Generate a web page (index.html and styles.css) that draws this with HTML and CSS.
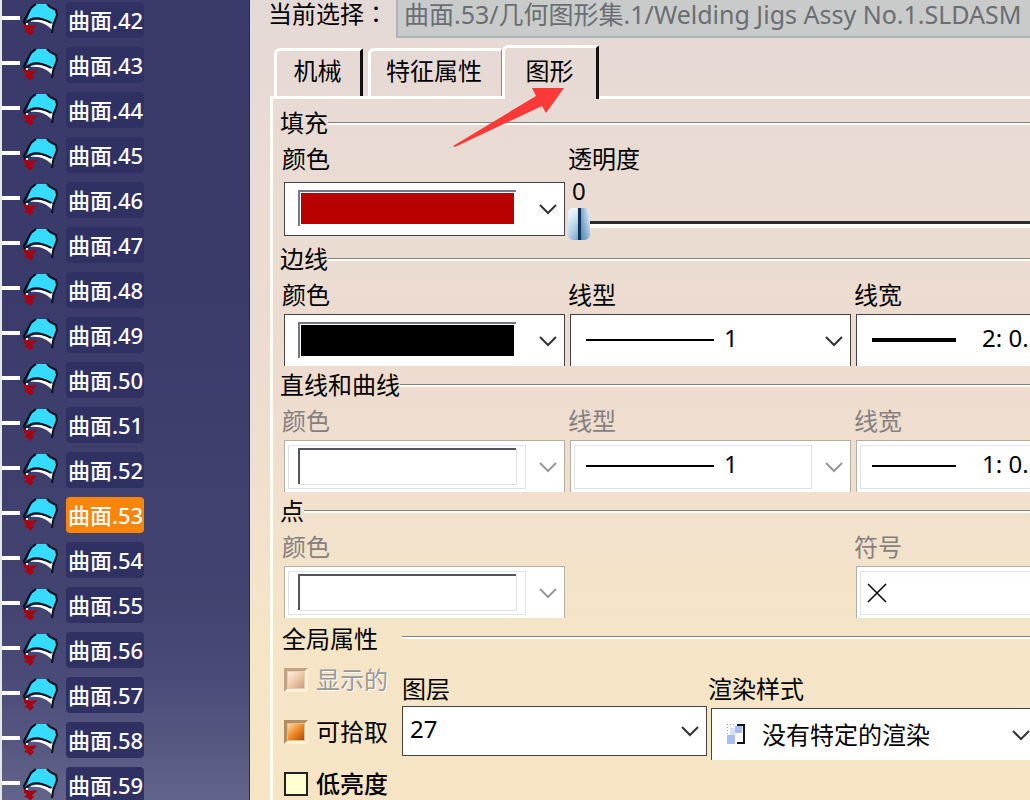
FILE: index.html
```html
<!DOCTYPE html>
<html lang="zh-CN">
<head>
  <meta charset="UTF-8">
  <meta name="viewport" content="width=device-width, initial-scale=1.0">
  <title>属性</title>
  <link rel="stylesheet" href="styles.css">
</head>
<body>
  <!-- 公用图标 -->
  <svg class="symbols" aria-hidden="true">
    <symbol id="surface" viewBox="0 0 38 36">
      <path d="M4 21 L9 6 L14 2 L25 2 L28 5 L35 8 L35 13 L31 21 C24 16 12 13 4 21 Z" fill="#35dcff"/>
      <path d="M9 19 C16 16 25 19 31 22 L30 28 C25 22 18 19 9 20 Z" fill="#fff"/>
      <path d="M14 2 L9 6 L2 19 L3 23" fill="none" stroke="#07101c" stroke-width="2"/>
      <path d="M4 21 C10 14 20 16 29 21" fill="none" stroke="#07101c" stroke-width="2"/>
      <path d="M25 2 L28 5 L34 8 L35 13 L31 24 L30 31" fill="none" stroke="#07101c" stroke-width="2"/>
      <path d="M2 22 L8 24 L15 23 L13 26 L10 28 L12 30 L8 34 L6 31 L2 30 L5 27 L2 26 Z" fill="#a80010"/>
      <rect x="4" y="21" width="2" height="2" fill="#fff"/>
    </symbol>
    <symbol id="chevron" viewBox="0 0 18 12">
      <path d="M1 2 L9 10 L17 2" fill="none" stroke="currentColor" stroke-width="2"/>
    </symbol>
  </svg>

  <div class="app">
    <ul class="tree">
      <li><svg><use href="#surface"/></svg><a href="#">曲面.42</a></li>
      <li><svg><use href="#surface"/></svg><a href="#">曲面.43</a></li>
      <li><svg><use href="#surface"/></svg><a href="#">曲面.44</a></li>
      <li><svg><use href="#surface"/></svg><a href="#">曲面.45</a></li>
      <li><svg><use href="#surface"/></svg><a href="#">曲面.46</a></li>
      <li><svg><use href="#surface"/></svg><a href="#">曲面.47</a></li>
      <li><svg><use href="#surface"/></svg><a href="#">曲面.48</a></li>
      <li><svg><use href="#surface"/></svg><a href="#">曲面.49</a></li>
      <li><svg><use href="#surface"/></svg><a href="#">曲面.50</a></li>
      <li><svg><use href="#surface"/></svg><a href="#">曲面.51</a></li>
      <li><svg><use href="#surface"/></svg><a href="#">曲面.52</a></li>
      <li><svg><use href="#surface"/></svg><a href="#" class="current">曲面.53</a></li>
      <li><svg><use href="#surface"/></svg><a href="#">曲面.54</a></li>
      <li><svg><use href="#surface"/></svg><a href="#">曲面.55</a></li>
      <li><svg><use href="#surface"/></svg><a href="#">曲面.56</a></li>
      <li><svg><use href="#surface"/></svg><a href="#">曲面.57</a></li>
      <li><svg><use href="#surface"/></svg><a href="#">曲面.58</a></li>
      <li><svg><use href="#surface"/></svg><a href="#">曲面.59</a></li>
    </ul>

    <div class="dialog">
      <div class="selection">
        <label for="selection" lang="zh-TW">当前选择：</label>
        <input type="text" id="selection" value="曲面.53/几何图形集.1/Welding Jigs Assy No.1.SLDASM" disabled>
      </div>

      <div class="tabs">
        <button type="button" class="tab tab-first">机械</button>
        <button type="button" class="tab tab-second">特征属性</button>
        <button type="button" class="tab tab-active">图形</button>
        <svg class="arrow" viewBox="0 0 112 60"><path d="M0 58 L83 8 L79 0 L111 0 L93 25 L89 18 L2 59 Z" fill="#fb3a38"/></svg>
      </div>

      <div class="panel">
        <section>
          <h2>填充</h2>
          <div class="fields fields-fill">
            <div class="field">
              <label for="fill-color">颜色</label>
              <div class="combo combo-fill">
                <select id="fill-color"></select>
                <span class="swatch red"></span>
                <svg class="chevron"><use href="#chevron"/></svg>
              </div>
            </div>
            <div class="field opacity">
              <label for="opacity">透明度</label>
              <output for="opacity">0</output>
              <input type="range" id="opacity" min="0" max="255" value="0">
            </div>
          </div>
        </section>

        <section>
          <h2>边线</h2>
          <div class="fields">
            <div class="field">
              <label for="edge-color">颜色</label>
              <div class="combo">
                <select id="edge-color"></select>
                <span class="swatch black"></span>
                <svg class="chevron"><use href="#chevron"/></svg>
              </div>
            </div>
            <div class="field">
              <label for="edge-type">线型</label>
              <div class="combo combo-type">
                <select id="edge-type"><option>1</option></select>
                <span class="line"></span>
                <svg class="chevron"><use href="#chevron"/></svg>
              </div>
            </div>
            <div class="field">
              <label for="edge-width">线宽</label>
              <div class="combo combo-width">
                <select id="edge-width"><option>2: 0.</option></select>
                <span class="line thick"></span>
              </div>
            </div>
          </div>
        </section>

        <section>
          <h2>直线和曲线</h2>
          <div class="fields">
            <div class="field off">
              <label for="curve-color">颜色</label>
              <div class="combo">
                <select id="curve-color" disabled></select>
                <span class="inner"></span>
                <span class="swatch"></span>
                <svg class="chevron"><use href="#chevron"/></svg>
              </div>
            </div>
            <div class="field off">
              <label for="curve-type">线型</label>
              <div class="combo combo-type">
                <select id="curve-type" disabled><option>1</option></select>
                <span class="inner"></span>
                <span class="line"></span>
                <svg class="chevron"><use href="#chevron"/></svg>
              </div>
            </div>
            <div class="field off">
              <label for="curve-width">线宽</label>
              <div class="combo combo-width">
                <select id="curve-width" disabled><option>1: 0.</option></select>
                <span class="inner"></span>
                <span class="line"></span>
              </div>
            </div>
          </div>
        </section>

        <section>
          <h2>点</h2>
          <div class="fields">
            <div class="field off">
              <label for="point-color">颜色</label>
              <div class="combo">
                <select id="point-color" disabled></select>
                <span class="inner"></span>
                <span class="swatch"></span>
                <svg class="chevron"><use href="#chevron"/></svg>
              </div>
            </div>
            <div class="field off symbol">
              <label for="point-symbol">符号</label>
              <div class="combo combo-width">
                <select id="point-symbol" disabled></select>
                <span class="inner"></span>
                <svg class="cross" viewBox="0 0 20 20"><path d="M1 1 L19 19 M19 1 L1 19" stroke="#000" stroke-width="1.5"/></svg>
              </div>
            </div>
          </div>
        </section>

        <section class="global">
          <h2>全局属性</h2>
          <div class="global-body">
            <div class="checks">
              <label class="disabled"><input type="checkbox" checked disabled>显示的</label>
              <label><input type="checkbox" checked>可拾取</label>
              <label class="strong"><input type="checkbox">低亮度</label>
            </div>
            <div class="field layer">
              <label for="layer">图层</label>
              <div class="combo">
                <select id="layer"><option>27</option></select>
                <svg class="chevron"><use href="#chevron"/></svg>
              </div>
            </div>
            <div class="field render">
              <label for="render">渲染样式</label>
              <div class="combo">
                <select id="render"><option>没有特定的渲染</option></select>
                <svg class="render-icon" viewBox="0 0 20 22">
                  <path d="M1 1h1v1h-1zM4 1h1v1h-1zM7 1h1v1h-1zM1 4h1v1h-1zM1 7h1v1h-1zM1 10h1v1h-1z" fill="#8f9bc4"/>
                  <path d="M9 3h7v7h-7z M1 12h8v9h-8z" fill="#a9bdf5"/>
                  <path d="M4 5h5v7h-5z" fill="#d6def8"/>
                  <path d="M11 2 H18 V20 H11" fill="none" stroke="#10102a" stroke-width="2"/>
                </svg>
                <svg class="chevron"><use href="#chevron"/></svg>
              </div>
            </div>
          </div>
        </section>
      </div>
    </div>
  </div>
</body>
</html>
```

FILE: styles.css
```css
html, body {
  margin: 0;
  padding: 0;
  height: 100%;
}
body, button, input, select {
  font-family: "Noto Sans", "Noto Sans CJK SC", sans-serif;
  font-size: 24px;
  line-height: 24px;
  color: #000;
}
body {
  overflow: hidden;
}
.symbols {
  display: none;
}
.app {
  display: flex;
  height: 100%;
}

/* 左侧结构树 */
.tree {
  display: flex;
  flex-direction: column;
  flex: none;
  gap: 9px;
  box-sizing: border-box;
  width: 250px;
  margin: 0;
  padding: 2px 0 0;
  list-style: none;
  border-left: 2px solid #e4e6ee;
  border-right: 1px solid #2b2a55;
  background: linear-gradient(#3a3b6b, #3a3b6b 35%, #42436f 75%, #4a4b78 85%, #63648a);
  overflow: hidden;
}
.tree li {
  display: flex;
  flex: none;
  align-items: center;
  height: 36px;
}
.tree li::before {
  content: "";
  width: 18px;
  height: 4px;
  margin-bottom: 4px;
  background: #fff;
}
.tree svg {
  width: 38px;
  height: 36px;
  margin: 0 6px 0 2px;
}
.tree a {
  padding: 0 1px 0 2px;
  border-radius: 4px;
  background: #303163;
  color: #fff;
  font-size: 22px;
  font-weight: 500;
  line-height: 36px;
  text-decoration: none;
}
.tree .current {
  background: #fb8509;
}

/* 属性对话框 */
.dialog {
  display: flex;
  flex-direction: column;
  flex: 1;
  min-width: 0;
  overflow: hidden;
  background: linear-gradient(#e5d9d7, #eadcd2 25%, #eedccf 50%, #f3e2cb 68%, #f5e5c6 80%, #f6e4c5);
}
.selection {
  display: flex;
  flex: none;
  height: 38px;
  margin-bottom: 7px;
  padding-left: 18px;
}
.selection label {
  width: 128px;
  font-family: "Noto Sans CJK TC", sans-serif;
  line-height: 26px;
  text-spacing-trim: space-all;
}
.selection input {
  flex: 1;
  min-width: 0;
  box-sizing: border-box;
  height: 38px;
  padding: 0 0 11px 6px;
  border: 1px solid #aeb3b7;
  border-width: 0 0 2px 2px;
  background: #c8cbca;
  color: #6b6d72;
  font-size: 25px;
}
.tabs {
  position: relative;
  display: flex;
  flex: none;
  align-items: flex-end;
  height: 51px;
  padding-left: 24px;
}
.tab {
  box-sizing: border-box;
  height: 48px;
  padding: 0 2px 5px 0;
  border: 0 solid #fff;
  border-width: 3px 3px 0;
  border-radius: 6px 2px 0 0;
  background: none;
}
.tab-first {
  width: 89px;
  margin-right: 5px;
  border-right-color: #111;
}
.tab-second {
  width: 134px;
  border-right: 1px solid #888;
  padding-right: 4px;
}
.tab-active {
  width: 97px;
  height: 54px;
  margin-bottom: -3px;
  border-right-color: #111;
  background: #e7dad5;
  z-index: 1;
}
/* 指向当前标签的箭头 */
.arrow {
  position: absolute;
  left: 203px;
  top: 43px;
  width: 112px;
  height: 60px;
  z-index: 2;
}
.panel {
  flex: 1 0 auto;
  margin-left: 20px;
  padding: 12px 0 0 7px;
  border: 0 solid #fffdf8;
  border-width: 3px 0 0 3px;
}
section {
  margin-bottom: 7px;
}
h2 {
  display: flex;
  align-items: center;
  margin: 0 0 12px;
  font-size: 24px;
  font-weight: 400;
  line-height: 24px;
}
h2::after {
  content: "";
  flex: 1;
  height: 2px;
  border-top: 1px solid #858080;
  background: #fffdf8;
}
.fields {
  display: grid;
  grid-template-columns: 283px 283px 1fr;
  gap: 3px;
  padding-left: 2px;
}
.fields-fill {
  grid-template-columns: 283px 1fr;
}
.field {
  display: flex;
  flex-direction: column;
  gap: 7px;
  min-width: 0;
}
.off label {
  color: #858080;
}
.symbol {
  grid-column: 3;
}

/* 下拉框: 所有子元素叠放在同一格 */
.combo {
  display: grid;
  grid-template-columns: minmax(0, 1fr);
  align-items: center;
  box-sizing: border-box;
  height: 52px;
  margin-left: 2px;
  border: 1px solid #444;
  border-bottom: 0;
  background: #fff;
  overflow: hidden;
}
.combo > * {
  grid-area: 1 / 1;
  pointer-events: none;
}
.combo select {
  width: 100%;
  height: 100%;
  padding: 0 0 6px;
  border: 0;
  appearance: none;
  background: transparent;
  color: #000;
  opacity: 1;
  pointer-events: auto;
}
.off .combo {
  border-color: #b5afaa;
}
.combo-fill {
  height: 54px;
  border-bottom: 1px solid #444;
}
.fields-fill .field:first-child {
  gap: 11px;
}
.chevron {
  justify-self: end;
  width: 18px;
  height: 12px;
  margin-right: 7px;
  color: #333;
}
.off .chevron {
  color: #999;
}
.swatch {
  box-sizing: border-box;
  height: 36px;
  margin: 0 48px 2px 13px;
  border: 0 solid #55555f;
  border-width: 2px 0 0 2px;
}
.red, .black {
  border-color: #77778a;
}
.red::before, .black::before {
  content: "";
  display: block;
  height: 31px;
  margin: 1px 2px 0 1px;
  background: #b90000;
}
.black::before {
  background: #000;
}
.off .swatch {
  box-shadow: 1px 1px #e2e2e2;
}
.inner {
  box-sizing: border-box;
  height: 44px;
  margin: 0 38px 0 3px;
  border: 1px solid #dfe3e4;
}
.line {
  width: 128px;
  height: 2px;
  margin: 0 0 1px 15px;
  background: #000;
}
.combo-type select {
  padding-left: 153px;
}
.combo-width {
  border-right: 0;
}
.combo-width select {
  padding-left: 125px;
}
.combo-width .line {
  width: 84px;
}
.combo-width .thick {
  height: 4px;
}
.combo-width .inner {
  margin-right: 0;
  border-right: 0;
}
.cross {
  width: 20px;
  height: 20px;
  margin-left: 10px;
}

/* 透明度滑块 */
.opacity {
  gap: 5px;
}
.opacity output {
  margin: 3px 0 0 4px;
  line-height: 24px;
}
.opacity input {
  width: 100%;
  height: 32px;
  margin: 0;
  appearance: none;
  background: linear-gradient(transparent 13px, #2b2b2b 13px, #2b2b2b 16px, #fffdf5 16px, #fffdf5 20px, transparent 20px);
}
.opacity input::-webkit-slider-thumb {
  appearance: none;
  width: 22px;
  height: 32px;
  border-radius: 5px;
  background: linear-gradient(90deg, transparent 10px, #12305c 10px, #12305c 13px, transparent 13px),
    linear-gradient(90deg, rgba(255, 255, 255, .5), rgba(255, 255, 255, .1) 40%, rgba(70, 120, 165, .6) 60%, rgba(255, 255, 255, .3)),
    linear-gradient(#eaf5fc, #a9cde6 50%, #6f9fc4);
}

/* 全局属性 */
.global {
  margin: 9px 0 0;
}
.global h2 {
  margin-bottom: 17px;
  padding-left: 2px;
}
.global h2::after {
  margin: 0 0 3px 24px;
}
.global-body {
  display: grid;
  grid-template-columns: 118px 305px 1fr;
  gap: 2px;
  padding-left: 2px;
}
.checks {
  display: flex;
  flex-direction: column;
  gap: 28px;
}
.checks label {
  display: flex;
  align-items: center;
  gap: 8px;
  white-space: nowrap;
}
.checks .disabled {
  color: #9a9797;
  text-shadow: 1px 1px #fff;
}
.checks .strong {
  font-weight: 500;
}
.checks input {
  flex: none;
  box-sizing: border-box;
  width: 24px;
  height: 24px;
  margin: 0 0 0 2px;
  appearance: none;
  border: 2px solid #222;
  background: #ffffd0;
}
.checks input:checked {
  border-color: #b58c62 #fff2d8 #fff2d8 #b58c62;
  border-width: 3px;
  background: linear-gradient(135deg, #ffd9a0, #f08a25 50%, #a84e08) content-box, #e6bd90;
  padding: 1px;
}
.checks input:disabled {
  border-color: #c2a27f #fff2d8 #fff2d8 #c2a27f;
  background: linear-gradient(135deg, #fff0e4, #efc8a8 50%, #c99c80) content-box, #e5cdb4;
}
.layer, .render {
  margin-top: 9px;
  gap: 5px;
}
.layer .combo {
  height: 50px;
  margin-left: 0;
  border-bottom: 1px solid #444;
}
.layer select {
  padding: 0 0 4px 7px;
}
.render {
  gap: 7px;
}
.render label {
  margin-left: -1px;
}
.render .combo {
  border-right: 0;
}
.render .chevron {
  margin-right: 0;
}
.render select {
  padding: 0 0 0 50px;
}
.render-icon {
  width: 20px;
  height: 22px;
  margin: 0 0 2px 14px;
}
```
